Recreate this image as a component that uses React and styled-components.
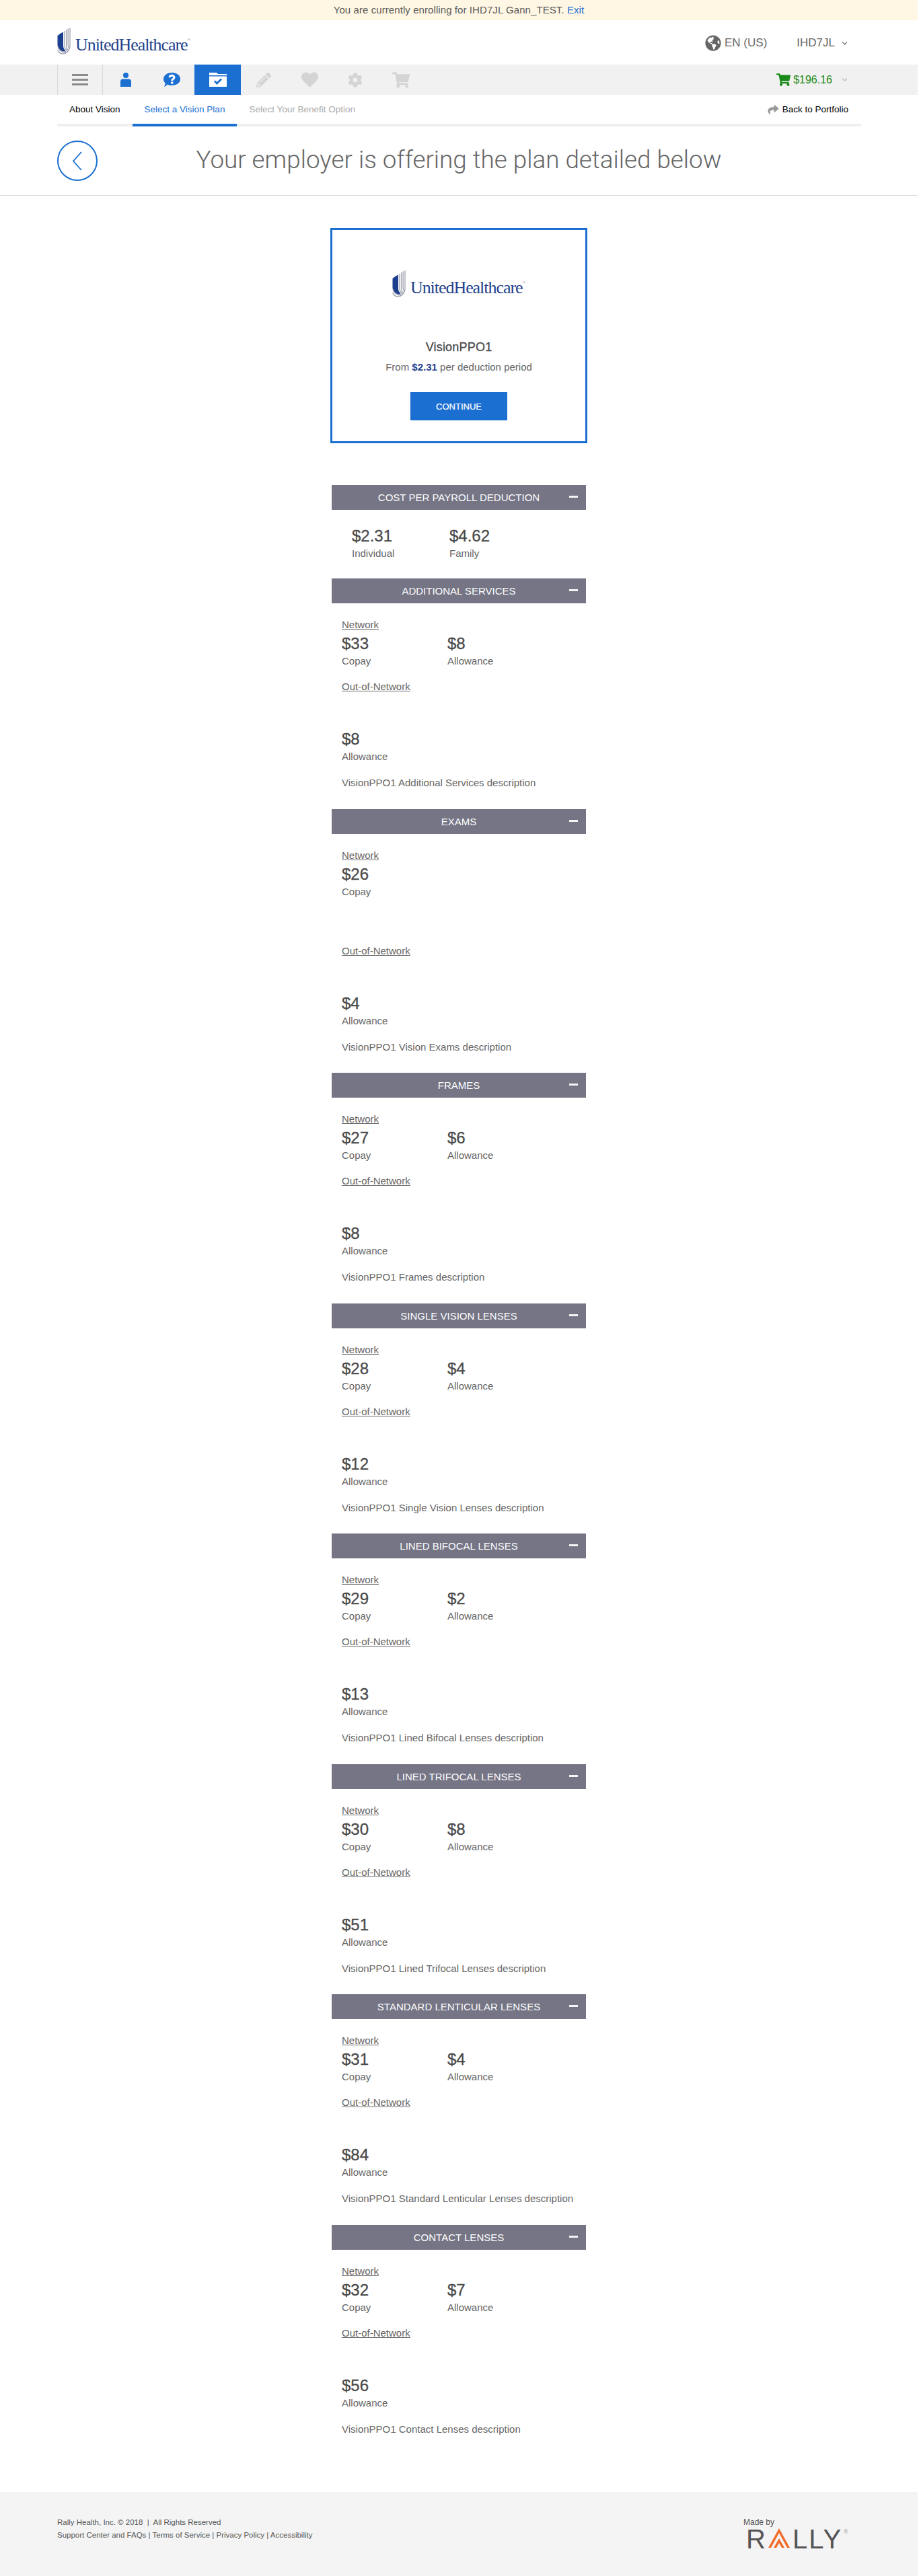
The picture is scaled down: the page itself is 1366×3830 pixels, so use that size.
import React from "react";
import styled, { createGlobalStyle } from "styled-components";
import { FaPencilAlt, FaHeart, FaCog, FaShoppingCart, FaGlobeAmericas, FaShare, FaChevronDown } from "react-icons/fa";

const Global = createGlobalStyle`
  html, body { margin: 0; padding: 0; background: #fff; }
  body { font-family: "Liberation Sans", Arial, sans-serif; color: #555; }
  * { box-sizing: border-box; }
`;

const BLUE = "#1b6fd1";

const Page = styled.div`
  width: 1364px;
  display: flex;
  flex-direction: column;
`;

const Banner = styled.div`
  height: 30px;
  background: #fff7e3;
  font-size: 15px;
  letter-spacing: .08px;
  line-height: 30px;
  text-align: center;
  color: #5a5a5a;
`;
const BlueLink = styled.a`color: ${BLUE};`;

const Header = styled.header`
  height: 66px;
  padding: 0 104px 0 85px;
  display: flex;
  align-items: flex-start;
  justify-content: space-between;
`;

const LogoWrap = styled.div`
  display: flex;
  align-items: flex-start;
  gap: 7px;
  padding-top: ${p => p.$top || 11}px;
`;
const LogoText = styled.span`
  font-family: "Liberation Serif", "Times New Roman", serif;
  font-size: 26px;
  line-height: 26px;
  letter-spacing: -1.05px;
  color: #24418c;
  margin-top: 13px;
  white-space: nowrap;
  sup { font-size: 6px; line-height: 0; letter-spacing: 0; vertical-align: 14px; color: #8a8a8a; }
`;

const HeaderRight = styled.div`
  display: flex;
  align-items: center;
  height: 48px;
  margin-top: 10px;
  color: #666;
  font-size: 17px;
`;
const Lang = styled.span`
  display: flex;
  align-items: center;
  gap: 5px;
  margin-right: 44px;
  color: #666;
`;
const Chevron = styled(FaChevronDown)`
  width: 9px;
  height: 9px;
  margin-left: 10px;
  color: ${p => p.$light ? "#bdbdbd" : "#777"};
`;

const NavBar = styled.nav`
  height: 45px;
  background: #f1f1f1;
  padding: 0 104px 0 85px;
  display: flex;
  align-items: stretch;
`;
const MenuCell = styled.div`
  width: 68px;
  border-left: 1px solid #d9d9d9;
  border-right: 1px solid #d9d9d9;
  display: flex;
  flex-direction: column;
  align-items: center;
  justify-content: center;
  gap: 3.5px;
`;
const MenuBar = styled.span`
  width: 24px;
  height: 3.5px;
  background: #8a8a8a;
`;
const NavCell = styled.div`
  width: ${p => p.$active ? 69 : 68}px;
  background: ${p => p.$active ? BLUE : "transparent"};
  color: ${p => p.$off ? "#d4d4d4" : BLUE};
  display: flex;
  align-items: center;
  justify-content: center;
`;
const CartTotal = styled.div`
  margin-left: auto;
  display: flex;
  align-items: center;
  gap: 4px;
  font-size: 16px;
  color: #1a8a1a;
`;

const SubNav = styled.div`
  height: 47px;
  margin: 0 84px 0 85px;
  border-bottom: 4px solid #efefef;
  display: flex;
  align-items: stretch;
  font-size: 13.5px;
`;
const SubTab = styled.div`
  padding: 0 18px;
  height: 47px;
  line-height: 44px;
  color: ${p => p.$tone === "active" ? BLUE : p.$tone === "off" ? "#aaa" : "#000"};
  border-bottom: 4px solid ${p => p.$tone === "active" ? BLUE : "transparent"};
  white-space: nowrap;
`;
const BackLink = styled.div`
  margin-left: auto;
  padding-right: 19px;
  display: flex;
  align-items: center;
  gap: 4px;
  height: 43px;
  color: #000;
  svg { color: #999; width: 19px; height: 16px; }
`;

const TitleRow = styled.div`
  height: 103px;
  padding: 21px 85px 0;
  border-bottom: 1px solid #d9d9d9;
  display: grid;
  grid-template-columns: 60px 1fr 60px;
  align-items: start;
`;
const BackCircle = styled.div`
  width: 60px;
  height: 60px;
  border-radius: 50%;
  border: 2px solid ${BLUE};
  display: flex;
  align-items: center;
  justify-content: center;
`;
const Title = styled.h1`
  margin: 0;
  height: 60px;
  line-height: 58px;
  font-family: Roboto, "Liberation Sans", sans-serif;
  font-weight: 300;
  font-size: 36.8px;
  color: #666;
  text-align: center;
  white-space: nowrap;
`;

const Main = styled.main`
  width: 382px;
  margin: 48px auto 0;
  padding-bottom: 0;
`;
const Card = styled.div`
  height: 320px;
  border: 3px solid ${BLUE};
  margin-bottom: 62px;
  display: flex;
  flex-direction: column;
  align-items: center;
`;
const CardName = styled.div`
  margin-top: 62px;
  font-size: 18px;
  line-height: 24px;
  letter-spacing: .2px;
  color: #4a4a4a;
  -webkit-text-stroke: .3px #4a4a4a;
`;
const CardFrom = styled.div`
  margin-top: 7px;
  font-size: 15px;
  line-height: 22px;
  color: #666;
  strong { color: #24418c; font-weight: 700; }
`;
const ContinueButton = styled.button`
  margin-top: 26px;
  width: 144px;
  height: 42px;
  border: 0;
  background: ${BLUE};
  color: #fff;
  font-family: inherit;
  font-size: 13px;
  -webkit-text-stroke: .2px #fff;
`;

const Section = styled.section`
  margin: 0 2px;
`;
const SectionHead = styled.div`
  height: 37px;
  background: #757585;
  color: #fff;
  display: grid;
  grid-template-columns: 40px 1fr 40px;
  align-items: center;
  font-size: 15px;
  text-align: center;
`;
const Minus = styled.span`
  justify-self: end;
  width: 13px;
  height: 3px;
  background: #f4f4f4;
  margin-right: 12px;
  margin-top: -2px;
`;
const CostBody = styled.div`
  padding: 25px 0 26px 30px;
  display: grid;
  grid-template-columns: 145px 145px;
`;
const Body = styled.div`
  padding: 22px 0 28.5px 15px;
`;
const NetLink = styled.a`
  display: block;
  width: fit-content;
  font-size: 15px;
  line-height: 20px;
  color: #666;
  text-decoration: underline;
`;
const NetStats = styled.div`
  margin-top: 4px;
  margin-bottom: ${p => p.$tall ? 67 : 17}px;
  display: grid;
  grid-template-columns: 157px 157px;
`;
const OutStats = styled.div`
  margin-top: 54px;
`;
const Value = styled.div`
  font-size: 24px;
  line-height: 28px;
  color: #4a4a4a;
  -webkit-text-stroke: .3px #4a4a4a;
`;
const Label = styled.div`
  margin-top: 1px;
  font-size: 15px;
  line-height: 22px;
  color: #666;
`;
const Description = styled.p`
  margin: 18px 0 0;
  font-size: 15px;
  line-height: 20px;
  color: #666;
`;

const Footer = styled.footer`
  margin-top: 56px;
  height: 124px;
  border-top: 1px solid #e2e2e2;
  background: #f4f4f4;
  padding: 34px 104px 0 85px;
  display: flex;
  justify-content: space-between;
  font-size: 11.5px;
  color: #555;
`;
const FooterLine = styled.div`
  line-height: 19px;
  white-space: pre;
`;
const MadeBy = styled.div`
  width: 165px;
  margin-right: -10px;
  font-size: 12px;
  line-height: 18px;
`;
const RallyRow = styled.div`
  display: flex;
  align-items: flex-start;
  margin-left: 4px;
  height: 32px;
  font-size: 40px;
  line-height: 32px;
  color: #555;
  letter-spacing: 2px;
  sup { font-size: 9px; line-height: 10px; letter-spacing: 0; color: #999; margin-left: 2px; }
`;

function Shield() {
  return (
    <svg width="20" height="40" viewBox="0 0 20 40" aria-hidden="true">
      <path d="M0.5 12 C3 10 6 8 9 6.5 V27 C9 31 11 33 13 35.5 C7 36 0.5 33 0.5 25 Z" fill="#1c3f8f" />
      <g fill="none" stroke="#9ea3ad" strokeWidth="1.3">
        <path d="M11 5 V27 C11 31 13 33.5 16 36" />
        <path d="M13.6 3 V27 C13.6 30 14.6 32.5 17 34" />
        <path d="M16.2 1.6 V26 C16.2 28 16.5 30 18 31.5" />
        <path d="M19 0.3 V27 C19 34 13 39.5 8 39 C4 38.6 1.5 36.5 0.8 33" />
        <path d="M1 28 C2 33 6 37 14 37" />
      </g>
    </svg>
  );
}

function Logo({ top }) {
  return (
    <LogoWrap $top={top}>
      <Shield />
      <LogoText>UnitedHealthcare<sup>®</sup></LogoText>
    </LogoWrap>
  );
}

const PersonIcon = () => (
  <svg width="16" height="21" viewBox="0 0 16 21" fill="currentColor">
    <circle cx="8" cy="4" r="4" />
    <path d="M0 13 C0 10.5 2 9.5 4 9.5 H12 C14 9.5 16 10.5 16 13 V21 H0 Z" />
  </svg>
);
const HelpIcon = () => (
  <svg width="25" height="21" viewBox="0 0 25 21">
    <path fill="currentColor" d="M12.5 0 C19.5 0 25 4 25 9.5 C25 15 19.5 19 12.5 19 C10 19 7.5 18.5 6 17.5 C4.5 19.5 2.5 20.7 0.8 21 C2 19.5 2.7 17.5 2.7 15.5 C1 14 0 12 0 9.5 C0 4 5.5 0 12.5 0 Z" />
    <path fill="none" stroke="#fff" strokeWidth="3" d="M9 7.2 C9.2 3.5 16 3.3 16 7 C16 9.5 12.7 9.5 12.7 12" />
    <rect x="11" y="13.5" width="3.4" height="3" fill="#fff" />
  </svg>
);
const FolderIcon = () => (
  <svg width="26" height="21" viewBox="0 0 26 21">
    <path fill="#fff" d="M0 0 H11 L13 2 H26 V4 H0 Z M0 5.5 H26 V21 H0 Z" />
    <path fill="none" stroke={BLUE} strokeWidth="2.8" d="M8 12.5 L11.5 16 L18 9.5" />
  </svg>
);
const BackChevron = () => (
  <svg width="16" height="29" viewBox="0 0 16 29" fill="none" stroke={BLUE} strokeWidth="1.8">
    <path d="M14 1 L2 14.5 L14 28" />
  </svg>
);
const RallyA = () => (
  <svg width="32" height="29" viewBox="0 0 32 29" fill="#f26c2b" style={{ margin: "0 4px 0 2px" }}>
    <path d="M16 0 L32 29 H28 L16 7 L4 29 H0 Z" />
    <path d="M16 15 L24 29 H20 L16 22 L12 29 H8 Z" />
  </svg>
);

const sections = [
  ["ADDITIONAL SERVICES", "$33", "$8", "$8", "Additional Services"],
  ["EXAMS", "$26", null, "$4", "Vision Exams"],
  ["FRAMES", "$27", "$6", "$8", "Frames"],
  ["SINGLE VISION LENSES", "$28", "$4", "$12", "Single Vision Lenses"],
  ["LINED BIFOCAL LENSES", "$29", "$2", "$13", "Lined Bifocal Lenses"],
  ["LINED TRIFOCAL LENSES", "$30", "$8", "$51", "Lined Trifocal Lenses"],
  ["STANDARD LENTICULAR LENSES", "$31", "$4", "$84", "Standard Lenticular Lenses"],
  ["CONTACT LENSES", "$32", "$7", "$56", "Contact Lenses"],
];

const Head = ({ children }) => (
  <SectionHead>
    <span />
    <span>{children}</span>
    <Minus />
  </SectionHead>
);

export default function App() {
  return (
    <Page>
      <Global />
      <Banner>You are currently enrolling for IHD7JL Gann_TEST. <BlueLink>Exit</BlueLink></Banner>
      <Header>
        <Logo top={11} />
        <HeaderRight>
          <Lang><FaGlobeAmericas size={24} color="#666" />EN (US)</Lang>
          IHD7JL<Chevron />
        </HeaderRight>
      </Header>
      <NavBar>
        <MenuCell><MenuBar /><MenuBar /><MenuBar /></MenuCell>
        <NavCell><PersonIcon /></NavCell>
        <NavCell><HelpIcon /></NavCell>
        <NavCell $active><FolderIcon /></NavCell>
        <NavCell $off><FaPencilAlt size={22} /></NavCell>
        <NavCell $off><FaHeart size={25} /></NavCell>
        <NavCell $off><FaCog size={22} /></NavCell>
        <NavCell $off><FaShoppingCart size={26} /></NavCell>
        <CartTotal><FaShoppingCart size={21} />$196.16<Chevron $light /></CartTotal>
      </NavBar>
      <SubNav>
        <SubTab>About Vision</SubTab>
        <SubTab $tone="active">Select a Vision Plan</SubTab>
        <SubTab $tone="off">Select Your Benefit Option</SubTab>
        <BackLink><FaShare />Back to Portfolio</BackLink>
      </SubNav>
      <TitleRow>
        <BackCircle><BackChevron /></BackCircle>
        <Title>Your employer is offering the plan detailed below</Title>
      </TitleRow>
      <Main>
        <Card>
          <Logo top={60} />
          <CardName>VisionPPO1</CardName>
          <CardFrom>From <strong>$2.31</strong> per deduction period</CardFrom>
          <ContinueButton>CONTINUE</ContinueButton>
        </Card>
        <Section>
          <Head>COST PER PAYROLL DEDUCTION</Head>
          <CostBody>
            <div><Value>$2.31</Value><Label>Individual</Label></div>
            <div><Value>$4.62</Value><Label>Family</Label></div>
          </CostBody>
        </Section>
        {sections.map(([title, copay, allow, outAllow, desc]) => (
          <Section key={title}>
            <Head>{title}</Head>
            <Body>
              <NetLink>Network</NetLink>
              <NetStats $tall={!allow}>
                <div><Value>{copay}</Value><Label>Copay</Label></div>
                {allow && <div><Value>{allow}</Value><Label>Allowance</Label></div>}
              </NetStats>
              <NetLink>Out-of-Network</NetLink>
              <OutStats><Value>{outAllow}</Value><Label>Allowance</Label></OutStats>
              <Description>VisionPPO1 {desc} description</Description>
            </Body>
          </Section>
        ))}
      </Main>
      <Footer>
        <div>
          <FooterLine>Rally Health, Inc. © 2018  |  All Rights Reserved</FooterLine>
          <FooterLine>Support Center and FAQs | Terms of Service | Privacy Policy | Accessibility</FooterLine>
        </div>
        <MadeBy>
          Made by
          <RallyRow>R<RallyA />LLY<sup>®</sup></RallyRow>
        </MadeBy>
      </Footer>
    </Page>
  );
}
